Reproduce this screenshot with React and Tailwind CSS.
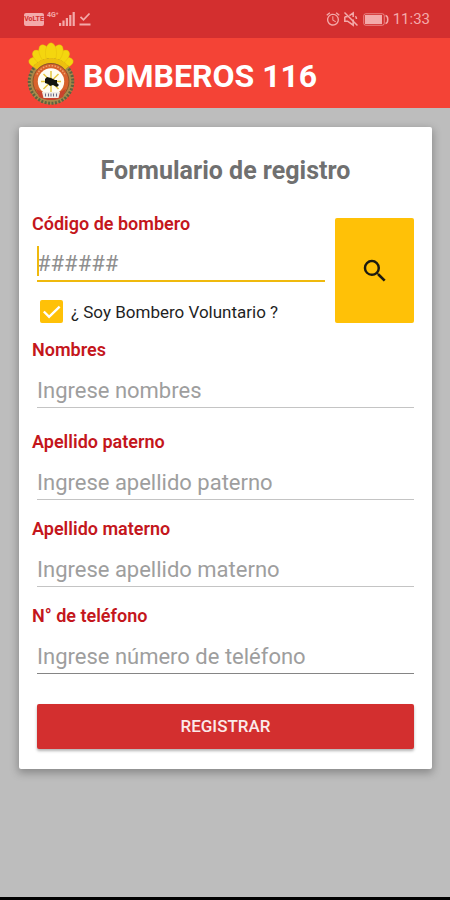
import { MdAlarm, MdSearch } from "react-icons/md";

const fields = [
  { id: "nombres", label: "Nombres", placeholder: "Ingrese nombres", type: "text", wrap: "mt-[17px]", line: "border-[#c4c4c4]" },
  { id: "paterno", label: "Apellido paterno", placeholder: "Ingrese apellido paterno", type: "text", wrap: "mt-6", line: "border-[#c4c4c4]" },
  { id: "materno", label: "Apellido materno", placeholder: "Ingrese apellido materno", type: "text", wrap: "mt-[19px]", line: "border-[#c4c4c4]" },
  { id: "telefono", label: "N° de teléfono", placeholder: "Ingrese número de teléfono", type: "tel", wrap: "mt-[19px]", line: "border-[#858585]" },
];

const petals = [-78, 78, -52, 52, -26, 26, 0];

function SignalIcon() {
  return (
    <svg viewBox="0 0 16 14" className="w-4 h-[14px]" fill="currentColor" aria-hidden="true">
      <rect x="0" y="11" width="2.2" height="3" />
      <rect x="3.4" y="8.5" width="2.2" height="5.5" />
      <rect x="6.8" y="6" width="2.2" height="8" />
      <rect x="10.2" y="3" width="2.2" height="11" />
      <rect x="13.6" y="0" width="2.2" height="14" />
    </svg>
  );
}

function CheckLineIcon() {
  return (
    <svg viewBox="0 0 12 14" className="w-3 h-[14px]" fill="none" stroke="currentColor" strokeWidth="1.8" aria-hidden="true">
      <path d="M1.5 4.8l3 3L10.500 1.500M0.500 12.500h11" />
    </svg>
  );
}

function MutedIcon() {
  return (
    <svg viewBox="0 0 16 16" className="size-4" fill="none" stroke="currentColor" strokeWidth="1.5" aria-hidden="true">
      <path d="M1.8 5.8v4.4h2.8l5.6 4V8.5M10.2 6V2L6.4 4.6M4.6 5.8H1.8M12.4 5.2c.8.8 1.1 1.7 1.1 2.8" />
      <path d="M1.5 1.5l13 13" />
    </svg>
  );
}

function BatteryIcon() {
  return (
    <svg viewBox="0 0 26 13" className="w-[26px] h-[13px]" aria-hidden="true">
      <rect x="0.75" y="0.75" width="20.5" height="11.5" rx="2" fill="none" stroke="currentColor" strokeWidth="1" opacity="0.7" />
      <rect x="2" y="2" width="17" height="9" fill="currentColor" />
      <path d="M22.5 2.5c3 .5 3 7.5 0 8" fill="none" stroke="currentColor" strokeWidth="1.5" />
    </svg>
  );
}

function Crest() {
  return (
    <svg viewBox="0 0 50 63" className="w-[50px] h-[63px] shrink-0" role="img" aria-label="Escudo de bomberos">
      {/* plume */}
      {petals.map((a) => (
        <ellipse key={a} cx="25" cy="11" rx="5.6" ry="10.2" fill="#f4d60f" stroke="#e0b60c" strokeWidth="0.4" transform={`rotate(${a} 25 23.5)`} />
      ))}
      <path d="M8 26c3-10 31-10 34 0z" fill="#f4d00c" />
      {/* laurel ring */}
      <circle cx="25" cy="39.5" r="20.5" fill="none" stroke="#a8894a" strokeWidth="5" />
      <circle cx="25" cy="39.5" r="21.8" fill="none" stroke="#5b6340" strokeWidth="3" strokeDasharray="2 1.5" />
      <path d="M9 26a21 21 0 0 1 32 0" fill="none" stroke="#edc00f" strokeWidth="5" />
      <circle cx="25" cy="39.5" r="18" fill="#d8622c" stroke="#8e5527" strokeWidth="1" />
      <path d="M11 32.500a15.500 15.500 0 0 1 28 0" fill="none" stroke="#efa36b" strokeWidth="1.500" strokeDasharray="1.500 1.500" />
      {/* centre */}
      <circle cx="25" cy="39.5" r="13.2" fill="#fffdf2" />
      <path d="M25 29v21M15 39.500h20M17.500 32l15 15M32.500 32l-15 15" stroke="#e5c643" strokeWidth="1.500" />
      <path d="M19 37l2-2 4 1 4 2 2 0 0 3 2 2-2 2-4-2-3 1-2-2-3-1z" fill="#14150f" />
      <path d="M10 47l6 3h18l6-3-3 8c-7 4-17 4-24 0z" fill="#c9432d" />
      <path d="M16 50h18l-1.500 6h-15z" fill="#f1ede6" />
      <path d="M19.500 51.500v3M22.500 51.500v3M25 51.500v3M27.500 51.500v3M30.500 51.500v3" stroke="#6c6c88" strokeWidth="1" />
    </svg>
  );
}

function StatusBar() {
  return (
    <div className="h-[38px] bg-[#d32f2f] text-[#f3aaaa] flex items-center justify-between pl-6 pr-5">
      <div className="flex items-center">
        <span className="h-[13px] w-5 flex items-center justify-center rounded-xs bg-[#f3aaaa] text-[#d32f2f] text-[7px] leading-none font-bold">VoLTE</span>
        <span className="ml-[3px] pb-2 text-[7px] leading-none font-bold">4G⁺</span>
        <SignalIcon />
        <span className="ml-1"><CheckLineIcon /></span>
      </div>
      <div className="flex items-center">
        <MdAlarm className="size-4" />
        <span className="ml-0.5"><MutedIcon /></span>
        <span className="ml-1"><BatteryIcon /></span>
        <span className="ml-1 text-[15px] leading-5">11:33</span>
      </div>
    </div>
  );
}

export default function App() {
  return (
    <div className="min-h-screen flex flex-col bg-[#bdbdbd] border-b-3 border-black font-[Roboto,sans-serif]">
      <StatusBar />
      <header className="h-[70px] bg-[#f44336] flex items-center gap-[7px] pl-[26px]">
        <Crest />
        <h1 className="pt-1.5 text-[32px] leading-10 font-bold text-white">BOMBEROS 116</h1>
      </header>

      <main className="pt-[19px] pl-[19px] pr-[18px] pb-6">
        <form className="bg-white rounded-xs pt-7 px-[18px] pb-5 shadow-[0_3px_8px_1px_rgba(0,0,0,0.28)]" onSubmit={(e) => e.preventDefault()}>
          <h2 className="text-center text-[25px] leading-8 font-bold text-[#707070]">Formulario de registro</h2>

          <div className="flex mt-[27px]">
            <div className="flex-1 min-w-0">
              <label htmlFor="codigo" className="-ml-[5px] block text-lg leading-5 font-semibold text-[#c4161c]">Código de bombero</label>
              <div className="relative">
                <input
                  id="codigo"
                  type="text"
                  placeholder="######"
                  className="block w-full h-12 pt-3 border-b-2 border-[#efb90d] text-[22px] placeholder:text-[#8f8f8f] outline-none"
                />
                <span className="absolute left-0 bottom-1.5 w-0.5 h-[30px] bg-[#efb90d]" />
              </div>
              <div className="flex items-center mt-[18px] ml-[3px]">
                <span className="relative flex">
                  <input id="voluntario" type="checkbox" defaultChecked className="appearance-none size-[23px] rounded-xs border-2 border-[#ffc107] checked:bg-[#ffc107]" />
                  <svg viewBox="0 0 24 24" className="absolute inset-0 size-full pointer-events-none" fill="none" stroke="white" strokeWidth="2.5">
                    <path d="M4 12l5.5 5.5L20.5 7" />
                  </svg>
                </span>
                <label htmlFor="voluntario" className="ml-2 text-[17px] leading-5 text-[#1f1f1f]">¿ Soy Bombero Voluntario ?</label>
              </div>
            </div>
            <button type="button" aria-label="Buscar" className="mt-1 ml-2.5 w-[79px] h-[105px] flex items-center justify-center rounded-xs bg-[#ffc107] text-[#1c1a10]">
              <MdSearch className="size-[30px]" />
            </button>
          </div>

          {fields.map((f) => (
            <div key={f.id} className={f.wrap}>
              <label htmlFor={f.id} className="-ml-[5px] block text-lg leading-5 font-semibold text-[#c4161c]">{f.label}</label>
              <input
                id={f.id}
                type={f.type}
                placeholder={f.placeholder}
                className={`block w-full h-12 pt-[14px] border-b text-[22px] placeholder:text-[#9e9e9e] outline-none ${f.line}`}
              />
            </div>
          ))}

          <button type="submit" className="mt-[30px] w-full h-[45px] rounded-xs bg-[#d32f2f] text-[17px] font-medium text-[#fbe9e9] shadow-[0_2px_3px_rgba(0,0,0,0.3)]">REGISTRAR</button>
        </form>
      </main>
    </div>
  );
}
